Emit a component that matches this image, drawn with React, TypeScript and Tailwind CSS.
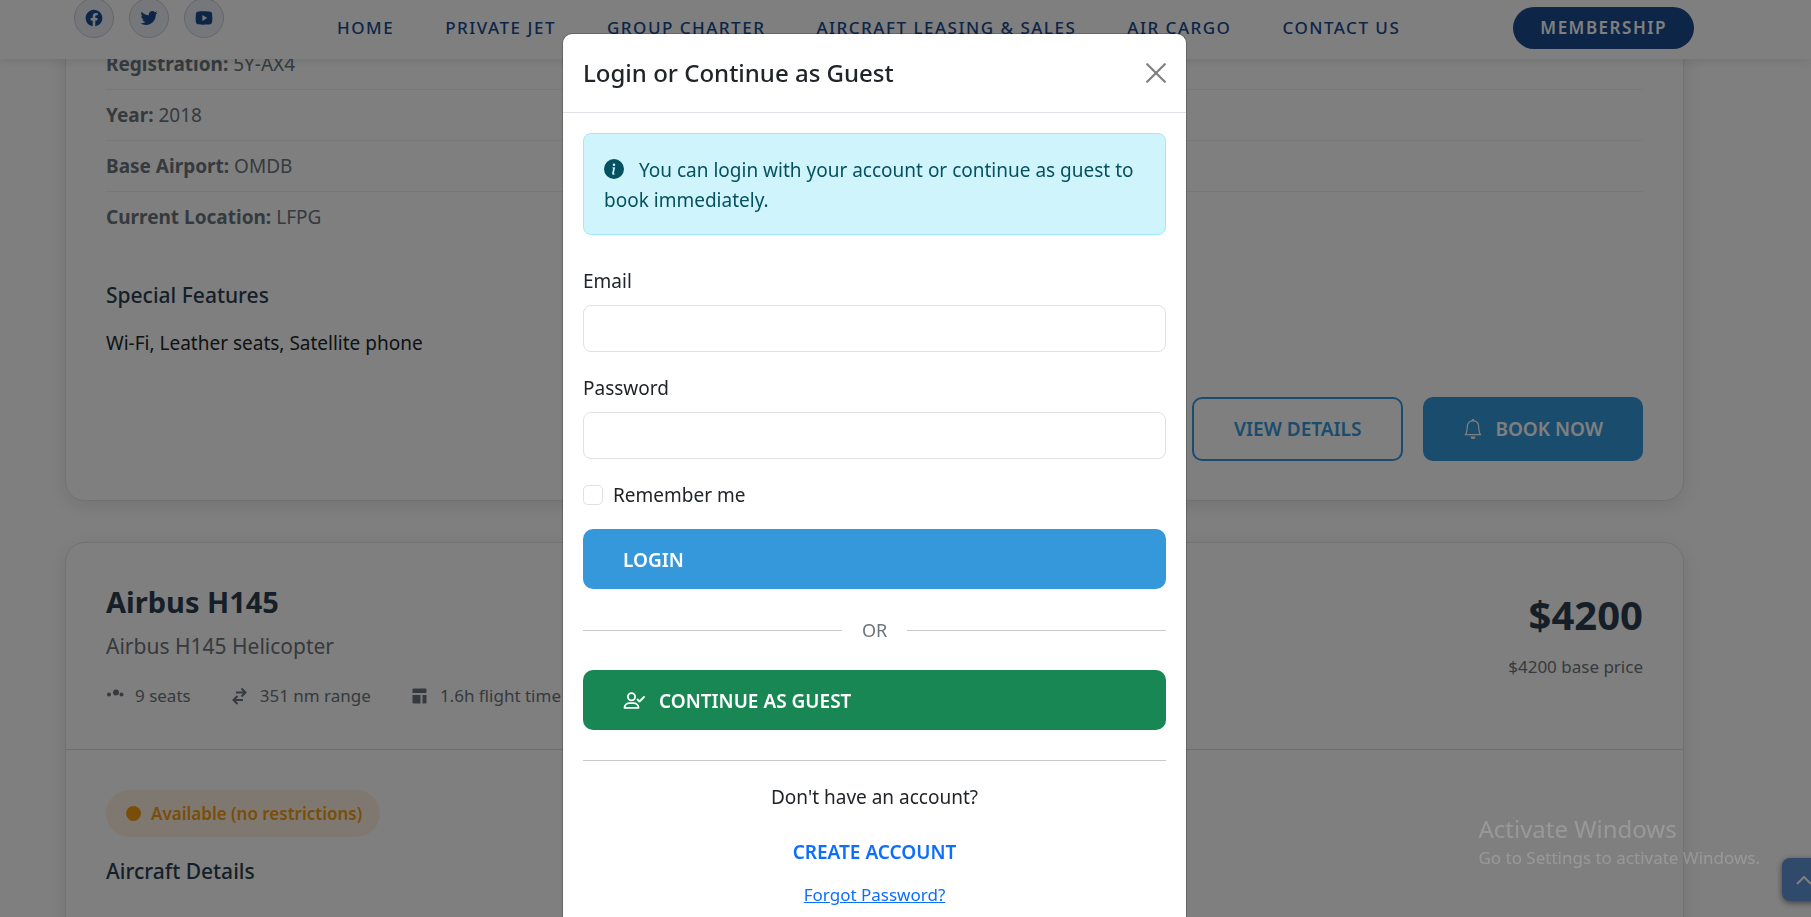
import React from "react";
import { BsBell, BsInfoCircleFill } from "react-icons/bs";
import { RiFacebookCircleFill, RiTwitterFill, RiYoutubeFill } from "react-icons/ri";

const navItems = [
  "HOME",
  "PRIVATE JET",
  "GROUP CHARTER",
  "AIRCRAFT LEASING & SALES",
  "AIR CARGO",
  "CONTACT US",
];

const socials = [
  { label: "Facebook", Icon: RiFacebookCircleFill },
  { label: "Twitter", Icon: RiTwitterFill },
  { label: "YouTube", Icon: RiYoutubeFill },
];

const details = [
  { name: "Registration:", value: "5Y-AX4" },
  { name: "Year:", value: "2018" },
  { name: "Base Airport:", value: "OMDB" },
  { name: "Current Location:", value: "LFPG" },
];

function SeatsIcon() {
  return (
    <svg viewBox="0 0 18 18" className="size-[18px]" fill="currentColor" aria-hidden="true">
      <circle cx="3" cy="7.500" r="2" />
      <circle cx="10" cy="5.500" r="3" />
      <circle cx="15.500" cy="7.500" r="2" />
    </svg>
  );
}

function RangeIcon() {
  return (
    <svg viewBox="0 0 18 18" className="size-[18px]" fill="none" stroke="currentColor" strokeWidth="2" aria-hidden="true">
      <path d="M5 5.500h9M10.500 1.500l4 4-4 4M12 13H3M6.500 9l-4 4 4 4" />
    </svg>
  );
}

function TimeIcon() {
  return (
    <svg viewBox="0 0 18 18" className="size-[18px]" fill="currentColor" aria-hidden="true">
      <path d="M2.500 1.500h12a1 1 0 0 1 1 1V6h-14V2.500a1 1 0 0 1 1-1zM1.500 8h8v8.500h-7a1 1 0 0 1-1-1zM11.500 8h4v7.500a1 1 0 0 1-1 1h-3z" />
    </svg>
  );
}

function GuestIcon() {
  return (
    <svg viewBox="0 0 22 20" className="h-5 w-[22px]" fill="none" stroke="currentColor" strokeWidth="1.800" strokeLinecap="round" strokeLinejoin="round" aria-hidden="true">
      <circle cx="8.500" cy="5.800" r="3.600" />
      <path d="M1.500 16.800c0-3 2.500-4.700 5-4.700h4c2.500 0 5 1.700 5 4.700zM14.500 8.500l2 2L21 6" />
    </svg>
  );
}

const stats = [
  { text: "9 seats", Icon: SeatsIcon },
  { text: "351 nm range", Icon: RangeIcon },
  { text: "1.6h flight time", Icon: TimeIcon },
];

const card = "rounded-[20px] border border-[#e4e4e4] bg-white shadow-[0_5px_20px_rgba(0,0,0,0.1)]";
const wideButton = "flex h-[60px] w-full items-center rounded-[10px] px-10 pt-[2px] text-[19px] font-semibold text-white";
const field = "mt-[9px] block h-[47px] w-full rounded-[8px] border border-[#dee2e6] bg-white px-4 outline-none";

function Header() {
  return (
    <header className="relative z-10 flex h-[59px] items-center justify-between bg-white pr-[117px] pb-[3px] pl-[74px] shadow-[0_2px_10px_rgba(0,0,0,0.1)]">
      <div className="flex gap-[15px] pb-5">
        {socials.map(({ label, Icon }) => (
          <a
            key={label}
            href="#"
            aria-label={label}
            className="flex size-10 items-center justify-center rounded-full border border-[#c8ccd4] bg-[#eceef6] text-[20px] text-[#1a4a8f]"
          >
            <Icon />
          </a>
        ))}
      </div>
      <nav className="flex gap-[51px] text-[17px] font-medium tracking-[1.5px] text-[#1a4a8f]">
        {navItems.map((item) => (
          <a key={item} href="#" className="whitespace-nowrap">
            {item}
          </a>
        ))}
      </nav>
      <a
        href="#"
        className="flex h-[42px] items-center rounded-full bg-[#1a4a8f] px-[27px] text-[17px] font-semibold tracking-[1.5px] text-white"
      >
        MEMBERSHIP
      </a>
    </header>
  );
}

function Listings() {
  return (
    <main className="-mt-[39px] pr-[127px] pl-[65px]">
      <section className={`${card} px-10 pt-[18px] pb-[39px]`}>
        <ul className="divide-y divide-[#f0f0f0] text-[19px] leading-[50px] text-[#6c757d]">
          {details.map((row) => (
            <li key={row.name}>
              <strong className="font-bold">{row.name}</strong> {row.value}
            </li>
          ))}
        </ul>
        <h4 className="mt-10 text-[21px] leading-[26px] font-medium text-[#2c3e50]">Special Features</h4>
        <p className="mt-5 text-[19px] leading-[30px] text-[#212529]">Wi-Fi, Leather seats, Satellite phone</p>
        <div className="mt-[39px] flex justify-end gap-5 text-[19px] font-semibold">
          <button className="h-16 rounded-[10px] border-2 border-[#3498db] px-10 text-[#3498db]">VIEW DETAILS</button>
          <button className="flex h-16 items-center gap-3 rounded-[10px] bg-[#3498db] px-10 text-white">
            <BsBell className="size-5" />
            BOOK NOW
          </button>
        </div>
      </section>

      <section className={`${card} mt-[41px] pb-20`}>
        <div className="flex justify-between border-b border-[#dcdcdc] px-10 pt-[41px] pb-10">
          <div>
            <h3 className="text-[29px] leading-[36px] font-bold text-[#2c3e50]">Airbus H145</h3>
            <p className="mt-[11px] text-[21px] leading-[30px] text-[#6c757d]">Airbus H145 Helicopter</p>
            <ul className="mt-[22px] flex gap-10 text-[17px] leading-[26px] text-[#6c757d]">
              {stats.map(({ text, Icon }) => (
                <li key={text} className="flex items-center gap-[11px]">
                  <Icon />
                  {text}
                </li>
              ))}
            </ul>
          </div>
          <div className="pt-[7px] text-right">
            <p className="text-[40px] leading-[48px] font-bold text-[#2c3e50]">$4200</p>
            <p className="mt-[15px] text-[17px] leading-[26px] text-[#6c757d]">$4200 base price</p>
          </div>
        </div>
        <div className="px-10 pt-10">
          <span className="inline-flex h-[47px] items-center gap-[10px] rounded-full bg-[#fff1e0] pr-[18px] pl-5 text-[17px] font-semibold text-[#f39c12]">
            <span className="size-[15px] rounded-full bg-[#f39c12]" />
            Available (no restrictions)
          </span>
          <h4 className="mt-[21px] text-[21px] leading-[26px] font-medium text-[#2c3e50]">Aircraft Details</h4>
        </div>
      </section>
    </main>
  );
}

function LoginDialog() {
  return (
    <div className="fixed inset-0 z-30 flex items-start justify-center overflow-hidden pt-[33px] pr-[62px]">
      <div
        role="dialog"
        aria-labelledby="login-title"
        className="w-[625px] rounded-[10px] border border-black/20 bg-white bg-clip-padding pb-10 text-[19px] leading-[30px] text-[#212529]"
      >
        <div className="flex h-[79px] items-center justify-between border-b border-[#dee2e6] px-5">
          <h5 id="login-title" className="text-[24px] leading-[38px] font-medium">
            Login or Continue as Guest
          </h5>
          <button aria-label="Close" className="text-[#7f7f7f]">
            <svg viewBox="0 0 20 20" className="size-5" fill="none" stroke="currentColor" strokeWidth="2.200" strokeLinecap="round">
              <path d="M1.200 1.200l17.600 17.600M18.800 1.200l-17.600 17.600" />
            </svg>
          </button>
        </div>
        <div className="px-5 pt-5">
          <div className="rounded-[8px] border border-[#9eeaf9] bg-[#cff4fc] px-5 pt-[21px] pb-[19px] text-[#055160]">
            <BsInfoCircleFill className="mr-[15px] inline size-5 align-[-2px]" />
            You can login with your account or continue as guest to book immediately.
          </div>
          <form className="mt-[31px]" onSubmit={(e) => e.preventDefault()}>
            <label htmlFor="email" className="block">
              Email
            </label>
            <input id="email" type="email" className={field} />
            <label htmlFor="password" className="mt-[21px] block">
              Password
            </label>
            <input id="password" type="password" className={field} />
            <div className="mt-[21px] flex items-center gap-[10px]">
              <input
                id="remember"
                type="checkbox"
                className="size-5 appearance-none rounded-[5px] border border-[#dee2e6] bg-white checked:bg-[#0d6efd]"
              />
              <label htmlFor="remember">Remember me</label>
            </div>
            <button type="submit" className={`${wideButton} mt-[19px] bg-[#3498db]`}>
              LOGIN
            </button>
          </form>
          <div className="mt-[26px] mb-[25px] flex items-center gap-5 text-[18px] text-[#6c757d]">
            <div className="h-px grow bg-[#c8c9ca]" />
            OR
            <div className="h-px grow bg-[#c8c9ca]" />
          </div>
          <button className={`${wideButton} gap-[14px] bg-[#198754]`}>
            <GuestIcon />
            CONTINUE AS GUEST
          </button>
          <div className="mt-[30px] h-px bg-[#c8c9ca]" />
          <div className="mt-[21px] flex flex-col items-center">
            <p>Don't have an account?</p>
            <button className="mt-3 h-14 px-10 font-semibold text-[#0d6efd]">CREATE ACCOUNT</button>
            <a href="#" className="text-[17px] text-[#0d6efd] underline">
              Forgot Password?
            </a>
          </div>
        </div>
      </div>
    </div>
  );
}

export default function App() {
  return (
    <div className="relative h-screen overflow-hidden bg-white font-['Noto_Sans','Open_Sans',sans-serif]">
      <Header />
      <Listings />
      <button
        aria-label="Back to top"
        className="fixed right-[-14px] bottom-4 flex size-[43px] items-center justify-center rounded-[8px] bg-[#6094d6] text-white shadow-[0_2px_6px_rgba(0,0,0,0.5)]"
      >
        <svg viewBox="0 0 16 16" className="size-4" fill="none" stroke="currentColor" strokeWidth="2">
          <path d="M1 12l7-7 7 7" />
        </svg>
      </button>
      <div className="fixed inset-0 z-20 bg-black/50" />
      <LoginDialog />
      <div className="pointer-events-none fixed right-[51px] bottom-[47px] z-40 text-white/20">
        <p className="text-[24px] leading-[34px]">Activate Windows</p>
        <p className="text-[17px] leading-[24px]">Go to Settings to activate Windows.</p>
      </div>
    </div>
  );
}
